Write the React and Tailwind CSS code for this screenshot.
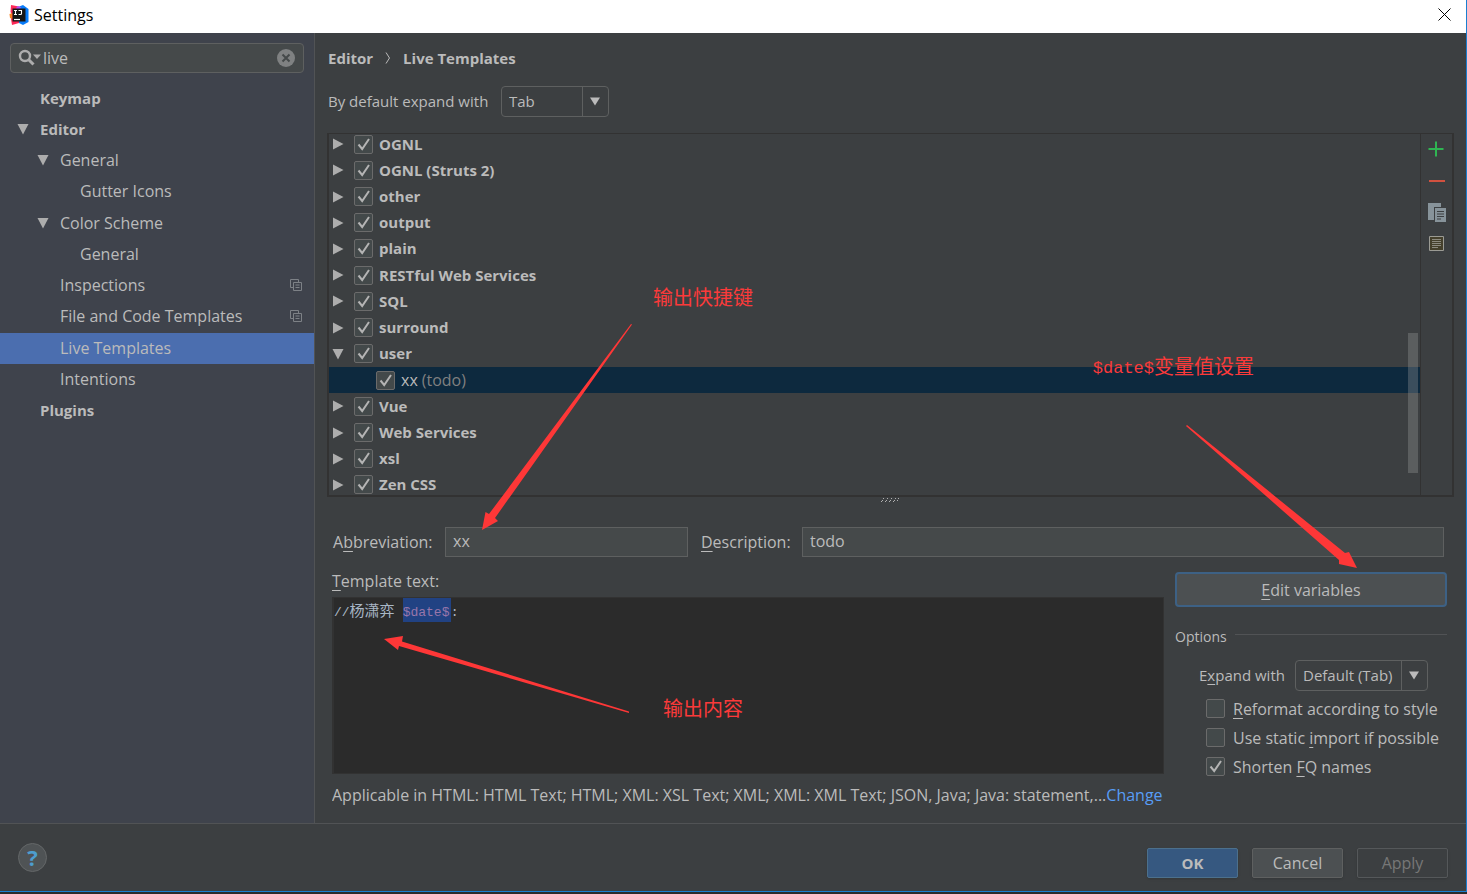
import { useState } from "react";

const sidebarItems = [
  { label: "Keymap", level: 0, bold: true },
  { label: "Editor", level: 0, bold: true, open: true },
  { label: "General", level: 1, open: true },
  { label: "Gutter Icons", level: 2 },
  { label: "Color Scheme", level: 1, open: true },
  { label: "General", level: 2 },
  { label: "Inspections", level: 1, project: true },
  { label: "File and Code Templates", level: 1, project: true },
  { label: "Live Templates", level: 1, selected: true },
  { label: "Intentions", level: 1 },
  { label: "Plugins", level: 0, bold: true },
];

const levelPadding = ["pl-4", "pl-9", "pl-14"];

const templateGroups = [
  { label: "OGNL" },
  { label: "OGNL (Struts 2)" },
  { label: "other" },
  { label: "output" },
  { label: "plain" },
  { label: "RESTful Web Services" },
  { label: "SQL" },
  { label: "surround" },
  { label: "user", open: true },
  { label: "xx", note: "(todo)", child: true },
  { label: "Vue" },
  { label: "Web Services" },
  { label: "xsl" },
  { label: "Zen CSS" },
];

function Triangle({ open = false }) {
  return (
    <svg viewBox="0 0 14 14" className="h-[14px] w-[14px] shrink-0 fill-[#adadad]" aria-hidden="true">
      <path d={open ? "M1.5 2h11L7 12.500z" : "M2 1.500v11L12.500 7z"} />
    </svg>
  );
}

function Mnemonic({ children }) {
  return <span className="underline decoration-1 underline-offset-3">{children}</span>;
}

function CheckBox({ id, label, defaultChecked = false }) {
  return (
    <span className="grid h-[19px] w-[19px] shrink-0">
      <input
        id={id}
        type="checkbox"
        aria-label={label}
        defaultChecked={defaultChecked}
        className="peer col-start-1 row-start-1 h-[19px] w-[19px] appearance-none rounded-xs border border-[#6b6b6b] bg-[#43494a]"
      />
      <svg
        viewBox="0 0 19 19"
        className="pointer-events-none invisible col-start-1 row-start-1 h-[19px] w-[19px] fill-none stroke-[#b4b4b4] stroke-2 peer-checked:visible"
        aria-hidden="true"
      >
        <path d="M4.500 9.500l3.700 4.500L15 4" />
      </svg>
    </span>
  );
}

function ComboBox({ id, options, className }) {
  return (
    <span className={`grid h-[31px] rounded-sm border border-[#5e6060] bg-[#3c3f41] ${className}`}>
      <select id={id} className="col-start-1 row-start-1 w-full appearance-none bg-transparent pl-[7px] text-[#bbbbbb] outline-none">
        {options.map((option) => (
          <option key={option}>{option}</option>
        ))}
      </select>
      <span className="pointer-events-none col-start-1 row-start-1 flex w-[26px] items-center justify-center justify-self-end border-l border-[#5e6060] pr-px">
        <svg viewBox="0 0 10 9" className="h-[9px] w-[10px] fill-[#bbbbbb]" aria-hidden="true">
          <path d="M0 0.500h10L5 8.500z" />
        </svg>
      </span>
    </span>
  );
}

function TitleBar() {
  return (
    <header className="flex h-[33px] shrink-0 items-center bg-white pb-1 text-black">
      <svg viewBox="0 0 20 20" className="ml-[9px] h-5 w-5" aria-hidden="true">
        <path d="M2 0l8 1.500V18L3 20l-1-6 1-4-1.500-3z" fill="#fe2857" />
        <path d="M.500 9l3-1v6l-2.500-1z" fill="#fc801d" />
        <path d="M9 2l5-2 5.500 4v13L14 20l-4-2z" fill="#087cfa" />
        <path d="M8 1.300L12 2l-1 2H7z" fill="#b74af7" />
        <path d="M3.500 3.500h13v13h-13z" fill="#161616" />
        <path d="M5 5.500h3M6.500 5.500v4M5 9.500h3M9.500 5.500h3v3q0 1-1 1H9.500" fill="none" stroke="#fff" strokeWidth="1.100" />
        <path d="M5 14.500h6" stroke="#fff" strokeWidth="1.200" />
      </svg>
      <h1 className="ml-[5px]">Settings</h1>
      <button type="button" aria-label="Close" className="mr-[15px] ml-auto">
        <svg viewBox="0 0 13 13" className="h-[13px] w-[13px] stroke-black" aria-hidden="true">
          <path d="M.500 .500l12 12M12.500 .500l-12 12" />
        </svg>
      </button>
    </header>
  );
}

function SearchBox() {
  const [query, setQuery] = useState("live");

  return (
    <div className="mx-[10px] mt-[10px] flex h-[30px] items-center rounded-sm border border-[#5e6060] bg-[#45494a] pr-2 pb-px pl-[7px]">
      <svg viewBox="0 0 24 18" className="h-[18px] w-6 shrink-0" aria-hidden="true">
        <circle cx="7" cy="7" r="5" fill="none" stroke="#adadad" strokeWidth="2.400" />
        <path d="M10.500 10.500l5 5" stroke="#adadad" strokeWidth="3" />
        <path d="M15 5.500h8l-4 4.500z" fill="#adadad" />
      </svg>
      <input
        type="text"
        aria-label="Search settings"
        value={query}
        onChange={(event) => setQuery(event.target.value)}
        className="min-w-0 flex-1 pl-px text-[#bbbbbb] outline-none"
      />
      <button type="button" aria-label="Clear search" onClick={() => setQuery("")}>
        <svg viewBox="0 0 18 18" className="h-[18px] w-[18px]" aria-hidden="true">
          <circle cx="9" cy="9" r="9" fill="#7f8182" />
          <path d="M5.500 5.500l7 7M12.500 5.500l-7 7" stroke="#45494a" strokeWidth="2" />
        </svg>
      </button>
    </div>
  );
}

function Sidebar() {
  return (
    <aside className="w-[315px] shrink-0 border-r border-[#515355] bg-[#3f434c]">
      <SearchBox />
      <nav className="mt-[10px] flex h-[344px] flex-col">
        {sidebarItems.map((item, index) => (
          <a
            key={index}
            href="#settings"
            className={`flex flex-1 items-center pr-3 pb-[2px] ${levelPadding[item.level]} ${item.selected ? "bg-[#4b6eaf]" : ""} ${item.bold ? "text-[15px] font-bold" : ""}`}
          >
            <span className="w-6 shrink-0">{item.open && <Triangle open />}</span>
            <span className="leading-6">{item.label}</span>
            {item.project && (
              <svg viewBox="0 0 12 12" className="ml-auto h-3 w-3 fill-none stroke-[#7d8186]" aria-hidden="true">
                <path d="M3 8.500H.500v-8h8V3" />
                <path d="M3.500 3.500h8v8h-8zM5.500 6h4M5.500 8.500h4" />
              </svg>
            )}
          </a>
        ))}
      </nav>
    </aside>
  );
}

function TemplateTree() {
  return (
    <div className="flex h-[364px] border-t border-r-2 border-b-2 border-l-2 border-[#323232]">
      <div className="relative flex flex-1 flex-col justify-center overflow-hidden">
        <ul className="flex h-[367px] shrink-0 flex-col">
          {templateGroups.map((group) => (
            <li
              key={group.label}
              className={`flex flex-1 items-center leading-5 ${group.child ? "bg-[#0d293e] pl-[47px]" : "pl-[2px] text-[15px] font-bold"}`}
            >
              {!group.child && (
                <span className="mr-[9px] flex">
                  <Triangle open={group.open} />
                </span>
              )}
              <CheckBox label={group.label} defaultChecked />
              <span className="ml-[6px] pb-px">{group.label}</span>
              {group.note && <span className="ml-1 pb-px text-[#808080]">{group.note}</span>}
            </li>
          ))}
        </ul>
        <div className="absolute top-[199px] right-[2px] h-[140px] w-[10px] bg-[#a6a6a6]/30" />
      </div>

      <div className="flex w-8 flex-col items-center gap-[13px] border-l border-[#323232] pt-[6px]">
        <button type="button" aria-label="Add">
          <svg viewBox="0 0 18 18" className="h-[18px] w-[18px] stroke-[#2fb552] stroke-2" aria-hidden="true">
            <path d="M.500 9h15M8 1.500v15" />
          </svg>
        </button>
        <button type="button" aria-label="Remove">
          <svg viewBox="0 0 18 18" className="h-[18px] w-[18px] stroke-[#d1513f] stroke-2" aria-hidden="true">
            <path d="M1 10h16" />
          </svg>
        </button>
        <button type="button" aria-label="Duplicate">
          <svg viewBox="0 0 18 20" className="h-5 w-[18px]" aria-hidden="true">
            <path d="M0 1h13v4H6v13H0z" fill="#87939a" />
            <path d="M7 6h11v14H7z" fill="#87939a" />
            <path d="M9 9.500h7M9 12h7M9 14.500h7M9 17h4" stroke="#3c3f41" />
          </svg>
        </button>
        <button type="button" aria-label="Restore defaults">
          <svg viewBox="0 0 18 18" className="h-[18px] w-[18px]" aria-hidden="true">
            <path d="M1.500 1.500h14v14h-14z" fill="#45402c" stroke="#9b9b94" />
            <path d="M4 4.500h9M4 6.500h9M4 8.500h9M4 10.500h9M4 12.500h6" stroke="#8d8b80" />
          </svg>
        </button>
      </div>
    </div>
  );
}

function TemplateForm() {
  return (
    <div className="mt-[30px] mr-[10px] ml-[6px] flex h-[30px] items-center">
      <label htmlFor="abbreviation" className="w-[112px] shrink-0">
        A<Mnemonic>b</Mnemonic>breviation:
      </label>
      <input
        id="abbreviation"
        type="text"
        defaultValue="xx"
        className="h-[30px] w-[243px] border border-[#5e6060] bg-[#45494a] px-[7px] pb-[2px] outline-none"
      />
      <label htmlFor="description" className="ml-[13px] w-[101px] shrink-0">
        <Mnemonic>D</Mnemonic>escription:
      </label>
      <input
        id="description"
        type="text"
        defaultValue="todo"
        className="h-[30px] min-w-0 flex-1 border border-[#5e6060] bg-[#45494a] px-[7px] pb-[2px] outline-none"
      />
    </div>
  );
}

function TemplateEditor() {
  return (
    <div className="flex min-w-0 flex-1 flex-col">
      <span id="template-text-label" className="mt-[14px] leading-5">
        <Mnemonic>T</Mnemonic>emplate text:
      </span>
      <div
        role="textbox"
        aria-multiline="true"
        aria-labelledby="template-text-label"
        contentEditable
        suppressContentEditableWarning
        className="mt-[6px] flex h-[177px] border border-l-2 border-[#323232] bg-[#2b2b2b] font-['Liberation_Mono','Noto_Sans_CJK_SC',monospace] text-[13px] leading-[30px] text-[#a9b7c6] outline-none"
      >
        <span className="whitespace-pre">//</span>
        <span className="mr-2 text-[15px]">杨潇弈</span>
        <span className="h-6 w-12 bg-[#214283] text-[#9876aa]">$date$</span>
        <span>:</span>
      </div>
      <p className="mt-[11px] flex leading-5">
        <span className="min-w-0 truncate">
          Applicable in HTML: HTML Text; HTML; XML: XSL Text; XML; XML: XML Text; JSON, Java; Java: statement,...
        </span>
        <a href="#change" className="shrink-0 text-[#589df6]">
          Change
        </a>
      </p>
    </div>
  );
}

function OptionsPanel() {
  return (
    <div className="w-[272px] shrink-0">
      <button
        type="button"
        className="mt-[15px] h-[35px] w-full rounded-sm border-2 border-[#3d6185] bg-[#4c5052]"
      >
        <Mnemonic>E</Mnemonic>dit variables
      </button>
      <fieldset className="mt-5">
        <legend className="flex w-full items-center gap-2 text-sm leading-5">
          Options
          <span className="mb-[5px] h-px flex-1 bg-[#515355]" />
        </legend>
        <div className="mt-[13px] flex items-center pl-6 text-[15px]">
          <label htmlFor="expand-with" className="w-24 shrink-0">
            E<Mnemonic>x</Mnemonic>pand with
          </label>
          <ComboBox id="expand-with" options={["Default (Tab)", "Space", "Tab", "Enter"]} className="w-[133px]" />
        </div>
        <div className="mt-[3px] flex flex-col pl-[31px]">
          <label htmlFor="reformat" className="flex h-[29px] items-center gap-2">
            <CheckBox id="reformat" />
            <span>
              <Mnemonic>R</Mnemonic>eformat according to style
            </span>
          </label>
          <label htmlFor="static-import" className="flex h-[29px] items-center gap-2">
            <CheckBox id="static-import" />
            <span>
              Use static <Mnemonic>i</Mnemonic>mport if possible
            </span>
          </label>
          <label htmlFor="shorten-names" className="flex h-[29px] items-center gap-2">
            <CheckBox id="shorten-names" defaultChecked />
            <span>
              Shorten <Mnemonic>F</Mnemonic>Q names
            </span>
          </label>
        </div>
      </fieldset>
    </div>
  );
}

function Footer() {
  return (
    <footer className="flex h-[68px] shrink-0 items-center border-t border-[#515355] pr-[18px] pb-px pl-[18px]">
      <button
        type="button"
        aria-label="Help"
        className="flex h-[29px] w-[29px] items-center justify-center rounded-full border border-[#646768] bg-[#4f5355] text-[22px] leading-none font-bold text-[#4d9dce]"
      >
        ?
      </button>
      <div className="ml-auto flex gap-[14px] pt-3">
        <button
          type="button"
          className="h-[30px] w-[91px] rounded-xs border border-[#4c708c] bg-[#365880] text-[15px] font-bold shadow-sm"
        >
          OK
        </button>
        <button type="button" className="h-[30px] w-[91px] rounded-xs border border-[#5e6060] bg-[#4c5052] shadow-sm">
          Cancel
        </button>
        <button type="button" disabled className="h-[30px] w-[91px] rounded-xs border border-[#55585a] text-[#777777] shadow-sm">
          Apply
        </button>
      </div>
    </footer>
  );
}

// Red arrows and notes drawn over the dialog
function Annotations() {
  return (
    <div className="pointer-events-none absolute inset-0 font-['Liberation_Mono','Noto_Sans_CJK_SC',monospace] text-xl leading-6 whitespace-nowrap text-[#fb3a3a]">
      <span className="absolute top-[288px] left-[653px]">输出快捷键</span>
      <svg viewBox="0 0 150 206" className="absolute top-[324px] left-[482px] h-[206px] w-[150px] fill-[#fe3737]" aria-hidden="true">
        <path d="M150 .500L149 0 7 190 3.500 188 0 206l16-9-3-3z" />
      </svg>

      <span className="absolute top-[357px] right-[212px] flex">
        <span className="text-[17px]">$date$</span>变量值设置
      </span>
      <svg viewBox="0 0 171 143" className="absolute top-[425px] right-[109px] h-[143px] w-[171px] fill-[#fe3737]" aria-hidden="true">
        <path d="M0 1L1 0 159 128l4-1 8 16-18-4 0-4z" />
      </svg>

      <svg viewBox="0 0 246 78" className="absolute top-[635px] left-[384px] h-[78px] w-[246px] fill-[#fe3737]" aria-hidden="true">
        <path d="M245 78V76.500L18 6.500l1-5.500L0 4l14 11 1-4z" />
      </svg>
      <span className="absolute top-[699px] left-[663px]">输出内容</span>
    </div>
  );
}

export default function App() {
  return (
    <div className="min-h-screen bg-[#2b2b2b] pb-[2px] font-['Open_Sans','Noto_Sans_CJK_SC',sans-serif] text-base text-[#bbbbbb]">
      <div className="relative flex min-h-[calc(100vh-2px)] flex-col border-r border-b border-[#1a7fd0] bg-[#3c3f41]">
        <TitleBar />
        <div className="flex flex-1">
          <Sidebar />
          <main className="min-w-0 flex-1 pr-3 pl-3">
            <div className="flex items-center gap-3 pt-[15px] pl-px text-[15px] leading-5 font-bold">
              <span>Editor</span>
              <svg viewBox="0 0 6 12" className="h-3 w-[6px] fill-none stroke-[#bbbbbb]" aria-hidden="true">
                <path d="M1 .500L4.500 6 1 11.500" />
              </svg>
              <h2>Live Templates</h2>
            </div>
            <div className="mt-[18px] mb-4 flex items-center pl-px text-[15px]">
              <label htmlFor="default-expand" className="w-[173px] shrink-0">
                By default expand with
              </label>
              <ComboBox id="default-expand" options={["Tab", "Space", "Enter"]} className="w-[108px]" />
            </div>
            <TemplateTree />
            <TemplateForm />
            <div className="mr-[7px] ml-[5px] flex gap-[11px]">
              <TemplateEditor />
              <OptionsPanel />
            </div>
          </main>
        </div>
        <Footer />
        <svg viewBox="0 0 18 5" className="absolute top-[498px] left-[881px] h-[5px] w-[18px] fill-[#b0b0b0]" aria-hidden="true">
          <path d="M2 0h1v1H2zM6 0h1v1H6zM10 0h1v1h-1zM14 0h1v1h-1zM17 0h1v1h-1zM1 2h1v1H1zM5 2h1v1H5zM9 2h1v1H9zM13 2h1v1h-1zM16 2h1v1h-1zM0 3h1v1H0zM4 3h1v1H4zM8 3h1v1H8zM12 3h1v1h-1z" />
        </svg>
        <Annotations />
      </div>
    </div>
  );
}
